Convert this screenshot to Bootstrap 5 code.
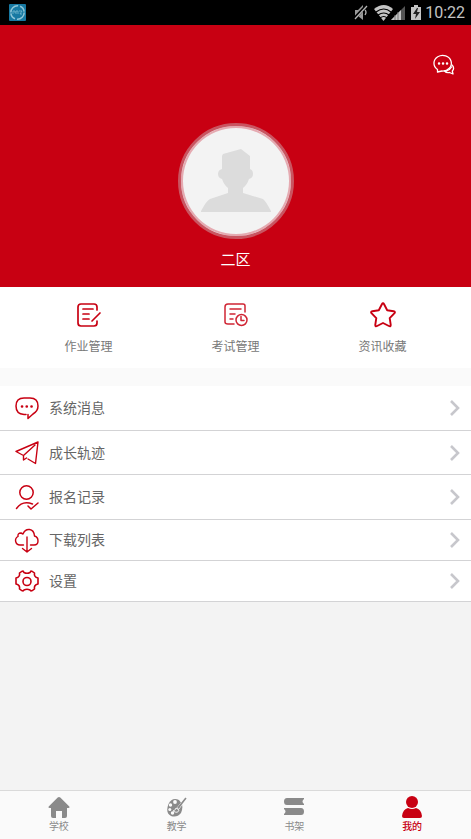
<!DOCTYPE html>
<html lang="zh-CN">
<head>
<meta charset="utf-8">
<meta name="viewport" content="width=device-width, initial-scale=1">
<title>我的</title>
<link href="https://cdn.jsdelivr.net/npm/bootstrap@5.3.0/dist/css/bootstrap.min.css" rel="stylesheet">
<style>
:root { --brand: #c80012; }
body { font-family: Roboto, "Noto Sans CJK SC", sans-serif; background: #f3f3f3; color: #666; }
svg { display: block; flex: none; }
.line-icon { fill: none; stroke: currentColor; stroke-linecap: round; stroke-linejoin: round; }
.status { height: 25px; background: #000; color: #c4c4c4; padding: 0 6px 0 9px; font-size: 16px; line-height: 25px; gap: 2px; }
.profile { background: var(--brand); padding: 28px 16px 16px; }
.profile-name { font-size: 15px; line-height: 22px; margin-top: 10px; }
.avatar { width: 116px; height: 116px; margin-top: 48px; border: 3px solid #c95561; background: #f3f3f3; box-shadow: inset 0 0 0 2px #e5aab1; }
.shortcuts { padding: 15px 15px 12px; }
.shortcut { color: #777; font-size: 12px; line-height: 18px; gap: 10px; }
.brand-icon { color: var(--brand); }
.spacer { height: 18px; background: #fafafa; }
.menu-row { height: 45px; padding: 0 10px 0 14px; border-bottom: 1px solid #d3d3d5; font-size: 14px; line-height: 20px; color: #666; gap: 10px; }
.menu-row.middle { height: 44px; }
.menu-row.compact { height: 41px; }
.chevron { color: #c7c7cc; stroke-width: 2.6; stroke-linecap: butt; stroke-linejoin: miter; }
.tabs { background: #fafafa; border-top: 1px solid #dadada; padding: 5px 0; }
.tab { color: #8a8a8a; font-size: 10px; line-height: 14px; gap: 1px; }
.tab.current { color: var(--brand); font-weight: 500; }
</style>
<script src="https://cdn.jsdelivr.net/npm/bootstrap@5.3.0/dist/js/bootstrap.bundle.min.js"></script>
</head>
<body class="d-flex flex-column min-vh-100">
<div class="status d-flex align-items-center">
  <svg class="me-auto" width="17" height="17" viewBox="0 0 17 17"><rect width="17" height="17" rx="1" fill="#1779a2"/><circle cx="8.500" cy="8.500" r="6.700" fill="none" stroke="#90c6d8" stroke-width="1.500" stroke-dasharray="11 2 7 1"/><path d="M4 10V7h2v2M7 10V7h2v3M10 7h3l-2 3h2" fill="none" stroke="#78bbd1" stroke-width=".8"/></svg>
  <svg width="70" height="18" viewBox="0 0 70 18" fill="#c4c4c4">
    <path d="M2 6h3l5-5v15l-5-4H2z" fill="#999"/><path d="M1 15 14 1" stroke="#000" stroke-width="3"/><path d="M2 15 14 2M12 6q2 2 0 5" stroke="#b5b5b5" fill="none" stroke-width="1.300"/>
    <path d="M21 5q10-8 19 0L30.500 17z"/><path d="M23 8q8-6 15 0M25 11q6-4 11 0M27 14q4-3 7 0" stroke="#000" fill="none" stroke-width="1.200"/>
    <path d="M38 16 52 2v14z" fill="#555"/><path d="M38 16 48 6v10z"/><path d="M42 11v5M45 8v8" stroke="#777" stroke-width="1"/>
    <path d="M58 3h3V1h4v2h3v13H58z"/><path d="m64 4-4 6h3l-1 5 5-7h-3l1-4z" fill="#222"/>
  </svg>
  <span>10:22</span>
</div>
<header class="profile d-flex flex-column align-items-center">
  <button type="button" class="btn p-0 border-0 text-white align-self-end" aria-label="消息">
    <svg class="line-icon" width="23" height="22" viewBox="0 0 23 22" stroke-width="1.300"><path d="M5.500 16.500A8.700 7.800 0 1 1 10 18L5.500 19z"/><path d="M20 12q3 3 .3 6l.7 3-3.500-1.500q-3 .8-5-1.500M19.500 14q-1.500 3-5 4"/><path d="M7 10.500h.1M11 10.500h.1M15 10.500h.1" stroke-width="2.400"/></svg>
  </button>
  <div class="avatar rounded-circle d-flex justify-content-center align-items-center">
    <svg width="70" height="64" viewBox="0 0 70 64" fill="#dcdcdc"><path d="M22 5 40 0l9 7v13q3 1 3 5t-4 5q-2 6-6 9v5l20 6q2 1 8 12v1H0v-1q6-11 9-12l18-6v-5q-4-3-6-9-4-1-4-5t4-5V7z"/></svg>
  </div>
  <div class="profile-name text-white">二区</div>
</header>
<nav class="shortcuts bg-white row g-0 text-center">
  <a href="#" class="shortcut col d-flex flex-column align-items-center text-decoration-none">
    <svg class="line-icon brand-icon" width="26" height="26" viewBox="0 0 26 26" stroke-width="1.700"><path d="M21 8V5q0-3-3-3H5Q2 2 2 5v16q0 3 3 3h13q3 0 3-3v-2M7 7h10M7 12h6M7 17h6M24 11l-8 8"/></svg>
    <span>作业管理</span>
  </a>
  <a href="#" class="shortcut col d-flex flex-column align-items-center text-decoration-none">
    <svg class="line-icon brand-icon" width="26" height="26" viewBox="0 0 26 26" stroke-width="1.500" opacity=".85"><path d="M22 10V4q0-2-2-2H5Q2 2 2 5v15q0 2 3 2h6M7 7h11M7 12h5M7 17h3"/><circle cx="18.500" cy="18" r="5.500"/><path d="M18 14.500v4h3"/></svg>
    <span>考试管理</span>
  </a>
  <a href="#" class="shortcut col d-flex flex-column align-items-center text-decoration-none">
    <svg class="line-icon brand-icon" width="26" height="26" viewBox="0 0 26 26" stroke-width="1.900"><path d="M11.900 2.200q1.100-2 2.200 0l3.100 6 6.400 1q2.200.5.700 2.200l-4.600 4.700 1 6.600q.2 2.300-1.800 1.300L13 21l-5.900 3q-2 1-1.800-1.300l1-6.600-4.600-4.700q-1.500-1.700.7-2.200l6.400-1z"/></svg>
    <span>资讯收藏</span>
  </a>
</nav>
<div class="spacer"></div>
<main class="flex-grow-1">
  <div class="bg-white">
    <a href="#" class="menu-row d-flex align-items-center text-decoration-none">
      <svg class="line-icon brand-icon" width="25" height="25" viewBox="0 0 25 25" stroke-width="1.500"><path d="M12 18.500H10Q2 18 2 10 2 2 10 2h6q8 0 8 8 0 5-5 8l-5 4.500v-4"/><path d="M8 10.500h.1M12.700 10.500h.1M17.500 10.500h.1" stroke-width="2.600"/></svg>
      <span class="flex-grow-1">系统消息</span>
      <svg class="line-icon chevron" width="12" height="16" viewBox="0 0 12 16"><path d="m2 1 7 7-7 7"/></svg>
    </a>
    <a href="#" class="menu-row middle d-flex align-items-center text-decoration-none">
      <svg class="line-icon brand-icon" width="25" height="25" viewBox="0 0 25 25" stroke-width="1.400"><path d="M14 19 21.500 23.500 24 2 2 11.500l7.500 4L21 5M9.500 15.500V20l3-2"/></svg>
      <span class="flex-grow-1">成长轨迹</span>
      <svg class="line-icon chevron" width="12" height="16" viewBox="0 0 12 16"><path d="m2 1 7 7-7 7"/></svg>
    </a>
    <a href="#" class="menu-row d-flex align-items-center text-decoration-none">
      <svg class="line-icon brand-icon" width="25" height="25" viewBox="0 0 25 25" stroke-width="1.500"><circle cx="12.500" cy="7.500" r="6.700"/><path d="M2.500 23.500q6-8.500 16-4.500M14 21l3 3 7-6"/></svg>
      <span class="flex-grow-1">报名记录</span>
      <svg class="line-icon chevron" width="12" height="16" viewBox="0 0 12 16"><path d="m2 1 7 7-7 7"/></svg>
    </a>
    <a href="#" class="menu-row compact d-flex align-items-center text-decoration-none">
      <svg class="line-icon brand-icon" width="25" height="25" viewBox="0 0 25 25" stroke-width="1.400"><path d="M9.500 17H6A4.500 4.500 0 0 1 4 8.500Q3.500 5 7 5l2 1q2-5 6.500-4.500Q20 2 20.500 8q3.500 1 3.500 5 0 4-4 4h-3.500M13 9v14.500M8.500 20.500l4.500 3.500 4.500-3.500"/></svg>
      <span class="flex-grow-1">下载列表</span>
      <svg class="line-icon chevron" width="12" height="16" viewBox="0 0 12 16"><path d="m2 1 7 7-7 7"/></svg>
    </a>
    <a href="#" class="menu-row compact d-flex align-items-center text-decoration-none">
      <svg class="line-icon brand-icon" width="25" height="25" viewBox="0 0 25 25" stroke-width="1.600"><path d="M10 3.500q3 1.500 6 0l1-1.500q1 0 3.500 2-.8 4 3.500 5v6q-4.300 1-3.500 5-2.500 2-3.500 2l-1-1q-3-1.500-6 0l-1 1q-1 0-3.500-2 .8-4-3.500-5v-6q4.300-1 3.500-5Q8 2 9 2z"/><circle cx="13" cy="12.500" r="4"/></svg>
      <span class="flex-grow-1">设置</span>
      <svg class="line-icon chevron" width="12" height="16" viewBox="0 0 12 16"><path d="m2 1 7 7-7 7"/></svg>
    </a>
  </div>
</main>
<nav class="tabs row g-0">
  <a href="#" class="tab col d-flex flex-column align-items-center text-decoration-none">
    <svg width="22" height="23" viewBox="0 0 22 23" fill="currentColor"><path d="M11 1q.7 0 1.300.6l9 8.800q.8 1.600-1 1.600H19v8q0 2-2 2h-3v-7H8v7H5q-2 0-2-2v-8H1.700q-1.800 0-1-1.600l9-8.800Q10.300 1 11 1"/></svg>
    <span>学校</span>
  </a>
  <a href="#" class="tab col d-flex flex-column align-items-center text-decoration-none">
    <svg width="22" height="23" viewBox="0 0 22 23"><path d="M13 4Q6 1 2.500 8-1 17 5 20q6 2 10-3 2-4 1-9" fill="currentColor"/><path d="M19 2q2 0 0 2l-6 9q-2 1-2-1z" fill="currentColor" stroke="#fafafa" stroke-width=".8"/><path d="m20 2-8 10" stroke="currentColor" stroke-width="1.500"/><g fill="#fafafa"><circle cx="9" cy="6" r="1.900"/><circle cx="4.500" cy="9" r="1.700"/><circle cx="3.800" cy="13.500" r="1.500"/><circle cx="6.500" cy="17" r="1.700"/></g><path d="M7 15q3-1 3-3l3 2q-1 4-6 1z" fill="currentColor" stroke="#fafafa" stroke-width=".9"/></svg>
    <span>教学</span>
  </a>
  <a href="#" class="tab col d-flex flex-column align-items-center text-decoration-none">
    <svg width="22" height="23" viewBox="0 0 22 23" fill="currentColor"><path d="M4 2h17v1q-3 2.500 0 5v1H4Q1 9 1 5.500T4 2M1 12h17q3 0 3 3.500T18 19H1v-1q3-2.500 0-5z"/></svg>
    <span>书架</span>
  </a>
  <a href="#" class="tab current col d-flex flex-column align-items-center text-decoration-none" aria-current="page">
    <svg width="22" height="23" viewBox="0 0 22 23" fill="currentColor"><circle cx="11" cy="6" r="6"/><path d="M7 12q4 2 8 0 5 1 6 8 0 2-2 2H3q-2 0-2-2 1-7 6-8"/></svg>
    <span>我的</span>
  </a>
</nav>
</body>
</html>
